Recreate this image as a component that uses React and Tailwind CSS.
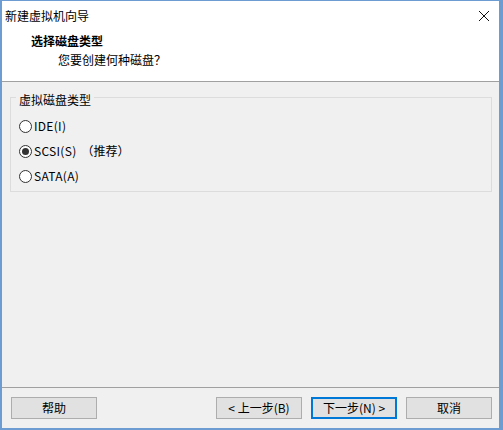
import React from "react";

const FONT = { fontFamily: '"Noto Sans CJK SC", "Microsoft YaHei", sans-serif' };

const OPTIONS = [
  { label: "IDE(I)", checked: false },
  { label: "SCSI(S)", extra: "（推荐）", checked: true },
  { label: "SATA(A)", checked: false },
];

function Radio({ checked }) {
  return (
    <span className="w-[13px] h-[13px] rounded-full border border-[#333] bg-white flex items-center justify-center shrink-0">
      {checked && <span className="w-[7px] h-[7px] rounded-full bg-[#333]" />}
    </span>
  );
}

function Button({ children, primary }) {
  return (
    <button
      className={
        "w-[86px] h-[22px] bg-[#e1e1e1] text-[12px] text-black flex items-center justify-center " +
        (primary ? "border-2 border-[#0078d7]" : "border border-[#adadad]")
      }
    >
      {children}
    </button>
  );
}

export default function App() {
  return (
    <div
      className="w-[503px] h-[430px] flex flex-col bg-[#f0f0f0] border-t border-b-2 border-l-2 border-r-4 border-[#6c9cd2] text-black text-[12px] leading-4"
      style={FONT}
    >
      {/* title bar */}
      <div className="h-[29px] bg-white flex items-center justify-between pl-[3px] pr-[6px]">
        <span>新建虚拟机向导</span>
        <svg width="12" height="12" viewBox="0 0 12 12" className="mr-[3px]">
          <path d="M1 1L11 11M11 1L1 11" stroke="#111" strokeWidth="1" />
        </svg>
      </div>

      {/* header */}
      <div className="h-[52px] bg-white border-b border-[#a0a0a0] pt-[3px]">
        <div className="pl-[29px] font-bold">选择磁盘类型</div>
        <div className="pl-[56px] mt-[3px]">您要创建何种磁盘？</div>
      </div>

      {/* body */}
      <div className="flex-1 pl-[8px] pr-[7px] pt-[15px] border-b border-[#a0a0a0]">
        <div className="relative border border-[#dcdcdc] h-[95px] pl-[8px] pt-[20px] flex flex-col gap-[9px]">
          <span className="absolute -top-[6px] left-[5px] px-[3px] bg-[#f0f0f0]">虚拟磁盘类型</span>
          {OPTIONS.map((o) => (
            <div key={o.label} className="flex items-center gap-[2px] h-[16px]">
              <Radio checked={o.checked} />
              <span className="tracking-[0.3px]">{o.label}</span>
              {o.extra && <span className="ml-[3px]">{o.extra}</span>}
            </div>
          ))}
        </div>
      </div>

      {/* buttons */}
      <div className="h-[40px] flex items-start pt-[9px] pl-[9px] pr-[7px]">
        <Button>帮助</Button>
        <div className="flex-1" />
        <div className="flex gap-[9px]">
          <Button>&lt; 上一步(B)</Button>
          <Button primary>下一步(N) &gt;</Button>
          <Button>取消</Button>
        </div>
      </div>
    </div>
  );
}
